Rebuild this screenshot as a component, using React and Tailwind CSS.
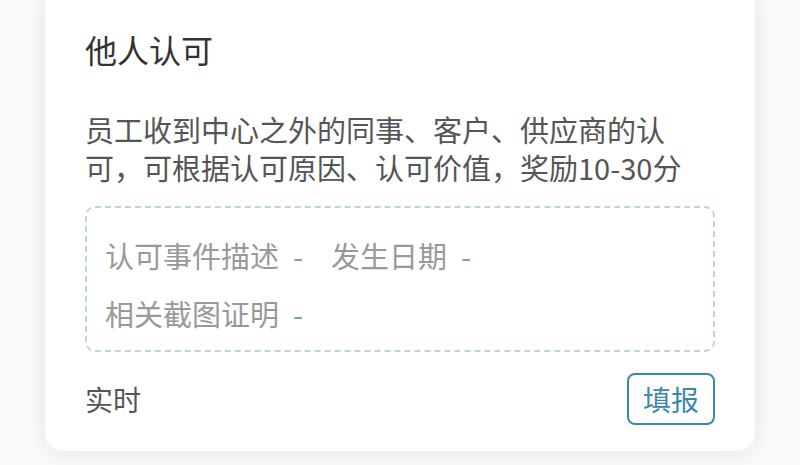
import React from "react";

const Row = ({ children }) => (
  <div className="flex items-center h-[40px] leading-[40px]">{children}</div>
);

const Dash = () => <span className="ml-[14px] text-[#7aa3a6]">-</span>;

export default function App() {
  return (
    <div
      className="w-[800px] h-[465px] overflow-hidden bg-[#fafafb]"
      style={{ fontFamily: '"Noto Sans CJK SC", "Noto Sans", sans-serif' }}
    >
      <div className="mx-[45px] -mt-[14px] bg-white rounded-[18px] shadow-[0_2px_22px_rgba(0,0,0,0.09)] px-[40px] pt-[41px] pb-[26px]">
        {/* title */}
        <h2 className="text-[32px] leading-[45px] text-[#333]">他人认可</h2>

        {/* description */}
        <p className="mt-[38px] text-[29px] leading-[38px] text-[#555]">
          员工收到中心之外的同事、客户、供应商的认可，可根据认可原因、认可价值，奖励10-30分
        </p>

        {/* dashed info box */}
        <div className="mt-[20px] border-2 border-dashed border-[#bcd6d8] rounded-[10px] pl-[18px] pt-[27px] pb-[17px] flex flex-col gap-[18px] text-[29px] text-[#999]">
          <Row>
            <span>认可事件描述</span>
            <Dash />
            <span className="ml-[28px]">发生日期</span>
            <Dash />
          </Row>
          <Row>
            <span>相关截图证明</span>
            <Dash />
          </Row>
        </div>

        {/* footer */}
        <div className="mt-[21px] flex items-center justify-between">
          <span className="text-[28px] text-[#555]">实时</span>
          <button className="h-[52px] px-[14px] border-2 border-[#3b88ad] rounded-[8px] text-[28px] leading-none text-[#3a87ad] bg-white">
            填报
          </button>
        </div>
      </div>
    </div>
  );
}
